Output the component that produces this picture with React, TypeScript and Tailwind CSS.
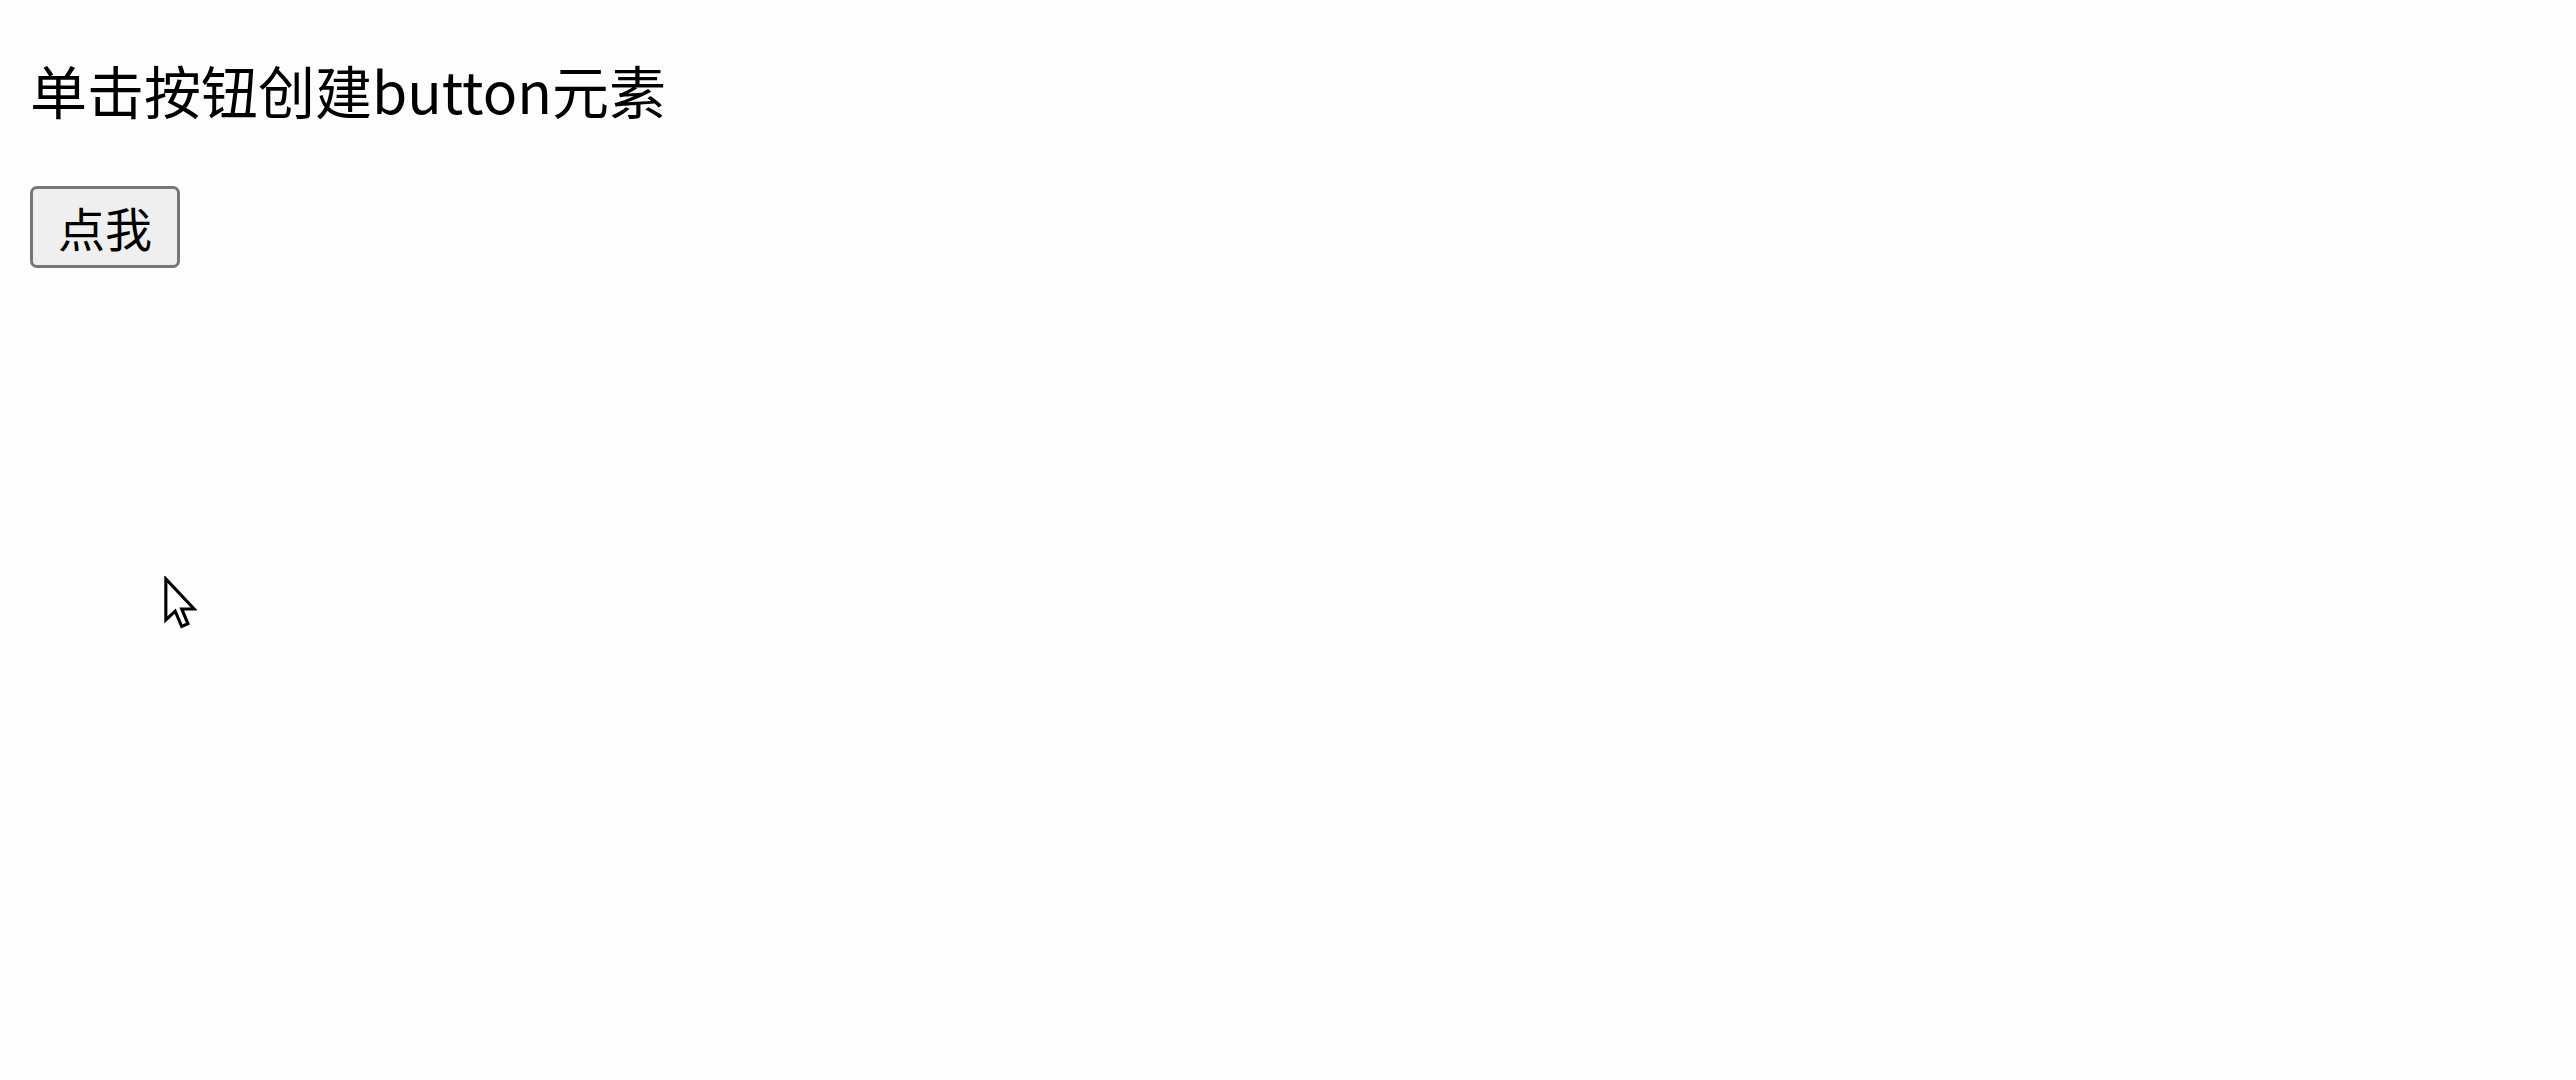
import React from "react";

export default function App() {
  return (
    <div
      className="relative min-h-screen w-full overflow-hidden bg-[#fdfdfd] px-[30px] pt-[52px] text-black"
      style={{ fontFamily: '"Noto Sans CJK SC", "Noto Sans", sans-serif' }}
    >
      <p className="m-0 text-[57px] leading-[75px]">单击按钮创建button元素</p>
      <div className="mt-[59px]">
        <button
          type="button"
          className="h-[82px] rounded-[7px] border-[3px] border-[#767676] bg-[#efefef] px-[25px] text-[47px] leading-[70px] text-black"
        >
          点我
        </button>
      </div>
      <svg
        className="absolute left-[163px] top-[576px]"
        width="34"
        height="54"
        viewBox="0 0 12 19"
        fill="none"
      >
        <path
          d="M1 1 L1 15.5 L4.3 12.4 L6.6 17.8 L8.8 16.8 L6.6 11.6 L11 11.6 Z"
          fill="#ffffff"
          stroke="#000000"
          strokeWidth="1.1"
          strokeLinejoin="miter"
        />
      </svg>
    </div>
  );
}
